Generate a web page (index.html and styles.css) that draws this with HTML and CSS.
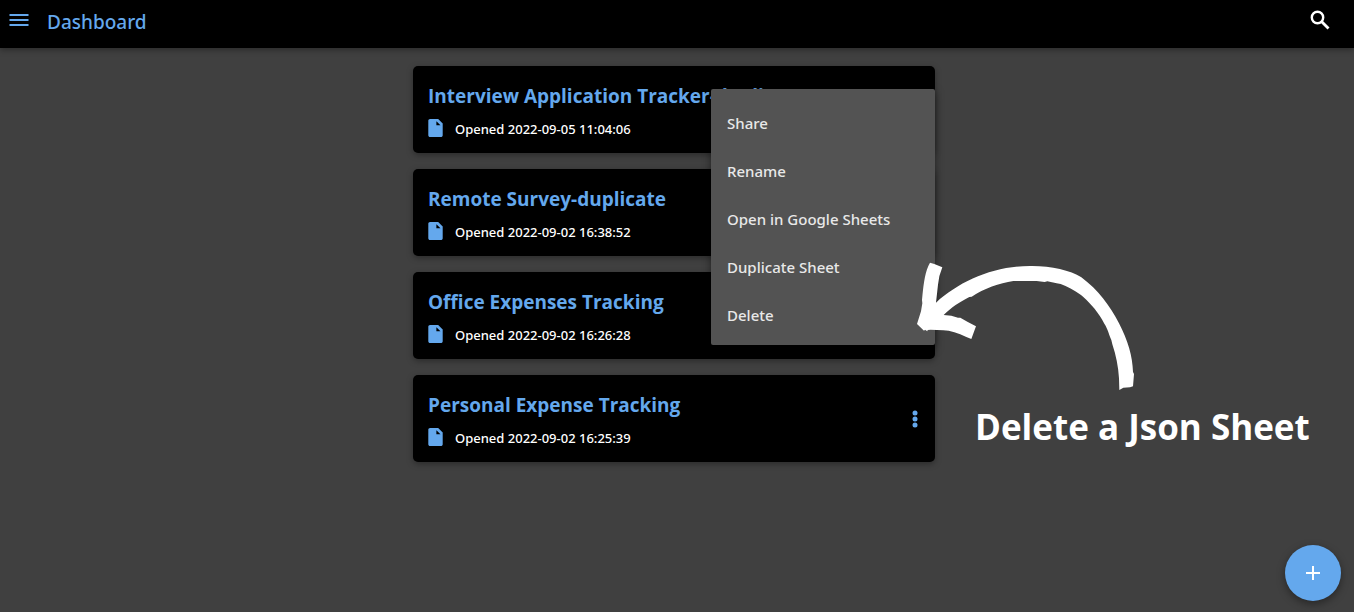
FILE: index.html
```html
<!DOCTYPE html>
<html lang="en">
<head>
<meta charset="utf-8">
<meta name="viewport" content="width=device-width, initial-scale=1">
<title>Dashboard</title>
<link rel="stylesheet" href="styles.css">
</head>
<body>
<svg class="sprite" aria-hidden="true">
  <symbol id="file" viewBox="4 2 16 20"><path d="M6 2h9l5 5v13c0 1.100-.9 2-2 2H6c-1.100 0-2-.9-2-2V4c0-1.100.9-2 2-2z"/><path d="M13 4.500V9h4.500z" fill="#000"/></symbol>
  <symbol id="dots" viewBox="0 0 24 24"><circle cx="12" cy="6" r="2.500"/><circle cx="12" cy="12" r="2.500"/><circle cx="12" cy="18" r="2.500"/></symbol>
</svg>
<header class="topbar">
  <button class="icon-button" type="button" aria-label="Open navigation">
    <svg class="icon" viewBox="0 0 24 24"><path d="M2.500 6h19v2h-19zM2.500 11h19v2h-19zM2.500 16h19v2h-19z"/></svg>
  </button>
  <h1 class="topbar-title">Dashboard</h1>
  <button class="icon-button search" type="button" aria-label="Search">
    <svg class="icon" viewBox="0 0 24 24"><circle cx="9.500" cy="9.500" r="5.700" fill="none" stroke="currentColor" stroke-width="2.400"/><path d="M13.500 13.500l7 7" stroke="currentColor" stroke-width="2.800"/></svg>
  </button>
</header>
<main class="content">
  <div class="sheets">
    <article class="card">
      <div class="card-text">
        <h2 class="card-title">Interview Application Tracker-duplicate</h2>
        <p class="card-meta"><svg class="file-icon"><use href="#file"/></svg>Opened 2022-09-05 11:04:06</p>
      </div>
      <button class="more" type="button" aria-label="More options"><svg class="icon"><use href="#dots"/></svg></button>
    </article>
    <article class="card">
      <div class="card-text">
        <h2 class="card-title">Remote Survey-duplicate</h2>
        <p class="card-meta"><svg class="file-icon"><use href="#file"/></svg>Opened 2022-09-02 16:38:52</p>
      </div>
      <button class="more" type="button" aria-label="More options"><svg class="icon"><use href="#dots"/></svg></button>
    </article>
    <article class="card">
      <div class="card-text">
        <h2 class="card-title">Office Expenses Tracking</h2>
        <p class="card-meta"><svg class="file-icon"><use href="#file"/></svg>Opened 2022-09-02 16:26:28</p>
      </div>
      <button class="more" type="button" aria-label="More options"><svg class="icon"><use href="#dots"/></svg></button>
    </article>
    <article class="card">
      <div class="card-text">
        <h2 class="card-title">Personal Expense Tracking</h2>
        <p class="card-meta"><svg class="file-icon"><use href="#file"/></svg>Opened 2022-09-02 16:25:39</p>
      </div>
      <button class="more" type="button" aria-label="More options"><svg class="icon"><use href="#dots"/></svg></button>
    </article>
    <div class="menu" role="menu">
      <button class="menu-item" type="button" role="menuitem">Share</button>
      <button class="menu-item" type="button" role="menuitem">Rename</button>
      <button class="menu-item" type="button" role="menuitem">Open in Google Sheets</button>
      <button class="menu-item" type="button" role="menuitem">Duplicate Sheet</button>
      <button class="menu-item" type="button" role="menuitem">Delete</button>
    </div>
    <svg class="arrow" viewBox="0 0 780 450" aria-hidden="true"><path d="M120 38L133 42L157 52Q146 78 144 104L138 158C208 94 310 48 420 48C480 47 540 60 574 82C625 120 660 168 687 220C714 272 728 320 729 366L732 372L729 409L720 412L700 413L688 420L687 385C685 350 678 315 667 283L664 270C655 248 653 236 643 221C625 187 604 163 580 141L573 135C552 120 531 109 512 102L500 100L472 94L464 96L440 93L370 93C328 99 282 116 245 140L238 141C208 157 184 172 161 195L184 197L204 203L211 203L232 215L258 229L244 267L229 261C204 249 181 242 160 241L122 239L113 240L112 244L105 239L102 242L81 222L93 184L97 160L96 150C100 110 103 76 115 48Z"/></svg>
    <p class="caption">Delete a Json Sheet</p>
  </div>
</main>
<button class="fab" type="button" aria-label="Add sheet">
  <svg class="icon" viewBox="0 0 24 24"><path d="M5 11h6V5h2v6h6v2h-6v6h-2v-6H5z"/></svg>
</button>
</body>
</html>
```
FILE: styles.css
```css
* { box-sizing: border-box; }
body {
  margin: 0;
  min-height: 100vh;
  background: #404040;
  color: #fff;
  font-family: "Noto Sans", "Open Sans", sans-serif;
}
button {
  border: 0;
  padding: 0;
  background: none;
  color: inherit;
  font: inherit;
  cursor: pointer;
}
h1, h2, p { margin: 0; }
.sprite { position: absolute; width: 0; height: 0; }
.icon { display: block; width: 24px; height: 24px; fill: currentColor; }
.topbar {
  display: flex;
  align-items: center;
  height: 48px;
  padding: 0 22px 8px 7px;
  background: #000;
  color: #64a8ed;
  box-shadow: 0 2px 6px rgba(0, 0, 0, .35);
}
.topbar-title {
  margin-left: 16px;
  padding-top: 4px;
  font-size: 19px;
  font-weight: 500;
  line-height: 28px;
}
.search { margin-left: auto; color: #fff; }
.content { padding: 18px 22px 18px 16px; }
.sheets {
  position: relative;
  display: flex;
  flex-direction: column;
  gap: 16px;
  max-width: 522px;
  margin: 0 auto;
}
.card {
  display: flex;
  align-items: center;
  justify-content: space-between;
  padding: 16px 8px 12px 15px;
  border-radius: 5px;
  background: #000;
  box-shadow: 0 2px 6px rgba(0, 0, 0, .35);
}
.card-title {
  color: #64a8ed;
  font-family: "Open Sans", "Noto Sans", sans-serif;
  font-size: 19px;
  font-weight: 700;
  line-height: 28px;
  white-space: nowrap;
}
.card-meta {
  display: flex;
  align-items: center;
  gap: 12px;
  margin-top: 7px;
  font-size: 13px;
  font-weight: 500;
  line-height: 24px;
}
.file-icon { width: 15px; height: 18px; margin-bottom: 2px; fill: #64a8ed; }
.more { padding-bottom: 4px; color: #64a8ed; }
.menu {
  position: absolute;
  top: 23px;
  right: 0;
  width: 224px;
  padding: 8px 0;
  border-radius: 2px;
  background: #535353;
  box-shadow: 0 3px 8px rgba(0, 0, 0, .5);
}
.menu-item {
  display: block;
  width: 100%;
  height: 48px;
  padding: 4px 16px 0;
  color: #e8e8e8;
  font-size: 15px;
  font-weight: 500;
  text-align: left;
}
.arrow {
  position: absolute;
  top: 184px;
  left: 477px;
  width: 260px;
  height: 150px;
  fill: #fff;
}
.caption {
  position: absolute;
  top: 337px;
  left: 562px;
  font-family: "Open Sans", "Noto Sans", sans-serif;
  font-size: 35px;
  font-weight: 700;
  line-height: 48px;
  white-space: nowrap;
}
.fab {
  position: fixed;
  right: 13px;
  bottom: 11px;
  display: grid;
  place-items: center;
  width: 56px;
  height: 56px;
  border-radius: 50%;
  background: #64a8ed;
  box-shadow: 0 3px 8px rgba(0, 0, 0, .4);
}
```
